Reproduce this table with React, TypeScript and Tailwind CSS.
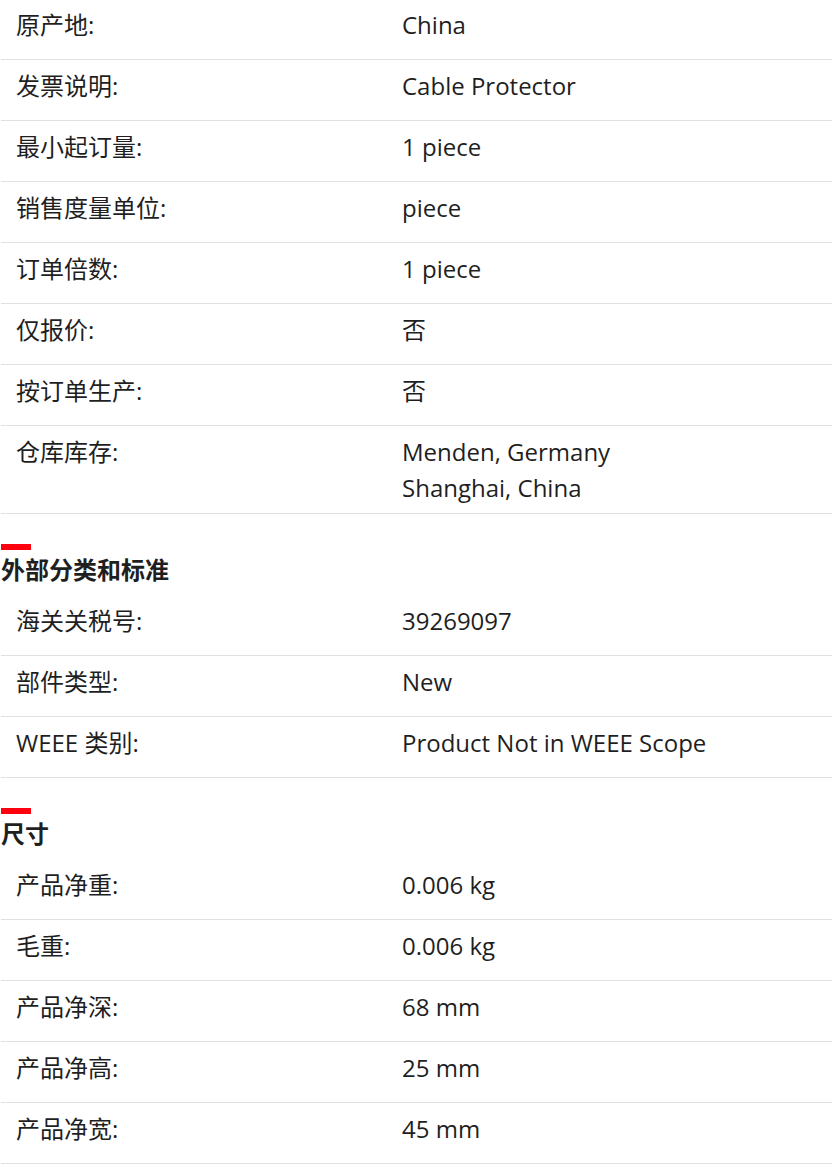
import React from "react";

type Row = { label: string; value: string[] };

const general: Row[] = [
  { label: "原产地:", value: ["China"] },
  { label: "发票说明:", value: ["Cable Protector"] },
  { label: "最小起订量:", value: ["1 piece"] },
  { label: "销售度量单位:", value: ["piece"] },
  { label: "订单倍数:", value: ["1 piece"] },
  { label: "仅报价:", value: ["否"] },
  { label: "按订单生产:", value: ["否"] },
  { label: "仓库库存:", value: ["Menden, Germany", "Shanghai, China"] },
];

const classification: Row[] = [
  { label: "海关关税号:", value: ["39269097"] },
  { label: "部件类型:", value: ["New"] },
  { label: "WEEE 类别:", value: ["Product Not in WEEE Scope"] },
];

const dims: Row[] = [
  { label: "产品净重:", value: ["0.006 kg"] },
  { label: "毛重:", value: ["0.006 kg"] },
  { label: "产品净深:", value: ["68 mm"] },
  { label: "产品净高:", value: ["25 mm"] },
  { label: "产品净宽:", value: ["45 mm"] },
];

function Rows({ rows }: { rows: Row[] }) {
  return (
    <div>
      {rows.map((r) => (
        <div
          key={r.label}
          className={
            "grid grid-cols-[386px_1fr] border-b border-[#e0e0e0] min-h-[61px] pt-2 " +
            (r.value.length > 1 ? "pb-[7px]" : "pb-2")
          }
        >
          <div className="pl-[15px] leading-[36px]">{r.label}</div>
          <div className="pl-[15px] leading-[36px]">
            {r.value.map((v) => (
              <div key={v}>{v}</div>
            ))}
          </div>
        </div>
      ))}
    </div>
  );
}

function Heading({ title }: { title: string }) {
  return (
    <div className="pt-[30px] pb-[9px]">
      <div className="w-[30px] h-[6px] bg-[#ff000f]" />
      <div className="mt-1 text-[24px] leading-[32px] font-bold">{title}</div>
    </div>
  );
}

export default function App() {
  return (
    <div
      className="w-[832px] bg-white text-[#1f1f1f] text-[24px] pl-px -mt-px"
      style={{ fontFamily: '"Open Sans", "Noto Sans CJK SC", sans-serif' }}
    >
      <Rows rows={general} />
      <Heading title="外部分类和标准" />
      <Rows rows={classification} />
      <Heading title="尺寸" />
      <Rows rows={dims} />
    </div>
  );
}
